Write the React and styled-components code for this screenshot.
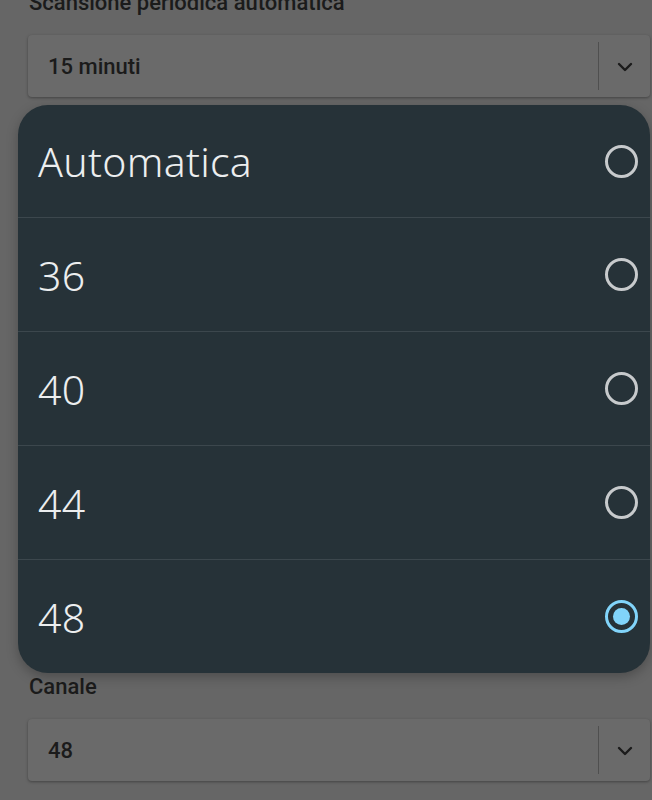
import React from "react";
import styled, { createGlobalStyle, css } from "styled-components";

const Global = createGlobalStyle`
  html, body { margin: 0; padding: 0; background: #666666; }
  body { width: 652px; height: 800px; overflow: hidden; font-family: Roboto, "Liberation Sans", sans-serif; }
  * { box-sizing: border-box; }
`;

const Screen = styled.div`
  position: relative;
  width: 652px;
  height: 800px;
  overflow: hidden;
  background: #666666;
`;

const Form = styled.div`
  display: flex;
  flex-direction: column;
  padding: 0 2px 0 28px;
  margin-top: -9px;
`;

const Field = styled.div`
  display: flex;
  flex-direction: column;
  gap: 20px;
`;

const Label = styled.div`
  font-family: Roboto, "Liberation Sans", sans-serif;
  font-weight: 500;
  font-size: 22px;
  line-height: 24px;
  color: #1b1b1b;
  padding-left: 1px;
`;

const Select = styled.div`
  display: flex;
  align-items: center;
  height: 62px;
  background: #6a6a6a;
  border-radius: 4px;
  box-shadow: 0 1px 3px rgba(0, 0, 0, 0.35);
`;

const SelectValue = styled.div`
  flex: 1;
  padding-left: 20px;
  font-family: Roboto, "Liberation Sans", sans-serif;
  font-weight: 500;
  font-size: 22px;
  color: #1b1b1b;
`;

const SelectDivider = styled.div`
  width: 1px;
  height: 48px;
  background: #4f4f4f;
`;

const Chevron = styled.div`
  width: 51px;
  display: flex;
  align-items: center;
  justify-content: center;
  padding-top: 2px;
`;

const Hidden = styled.div`
  height: 578px;
`;

const Dialog = styled.div`
  position: absolute;
  top: 105px;
  left: 18px;
  width: 632px;
  background: #263238;
  border-radius: 30px;
  overflow: hidden;
  box-shadow: 0 4px 12px rgba(0, 0, 0, 0.25);
`;

const Option = styled.div`
  display: flex;
  align-items: center;
  justify-content: space-between;
  height: 114px;
  padding: 0 12px 0 20px;
  border-top: 1px solid #3c474d;
  &:first-child {
    height: 112px;
    border-top: none;
  }
`;

const OptionText = styled.span`
  font-family: "Noto Sans", "Open Sans", sans-serif;
  font-size: 41px;
  font-weight: 350;
  color: #eceeef;
  letter-spacing: 0.3px;
`;

const Radio = styled.span`
  position: relative;
  width: 33px;
  height: 33px;
  border-radius: 50%;
  border: 3px solid ${(p) => (p.$checked ? "#81d4fa" : "#c7cacc")};
  ${(p) =>
    p.$checked &&
    css`
      &::after {
        content: "";
        position: absolute;
        left: 50%;
        top: 50%;
        width: 17px;
        height: 17px;
        margin: -8.5px 0 0 -8.5px;
        border-radius: 50%;
        background: #81d4fa;
      }
    `}
`;

const ChevronIcon = () => (
  <svg width="16" height="10" viewBox="0 0 16 10">
    <path d="M2 2 L8 8 L14 2" fill="none" stroke="#1b1b1b" strokeWidth="2.4" strokeLinecap="round" strokeLinejoin="round" />
  </svg>
);

const SelectBox = ({ value }) => (
  <Select>
    <SelectValue>{value}</SelectValue>
    <SelectDivider />
    <Chevron>
      <ChevronIcon />
    </Chevron>
  </Select>
);

const options = ["Automatica", "36", "40", "44", "48"];

export default function App() {
  return (
    <Screen>
      <Global />
      <Form>
        <Field>
          <Label>Scansione periodica automatica</Label>
          <SelectBox value="15 minuti" />
        </Field>
        <Hidden />
        <Field>
          <Label>Canale</Label>
          <SelectBox value="48" />
        </Field>
      </Form>
      <Dialog>
        {options.map((o) => (
          <Option key={o}>
            <OptionText>{o}</OptionText>
            <Radio $checked={o === "48"} />
          </Option>
        ))}
      </Dialog>
    </Screen>
  );
}
